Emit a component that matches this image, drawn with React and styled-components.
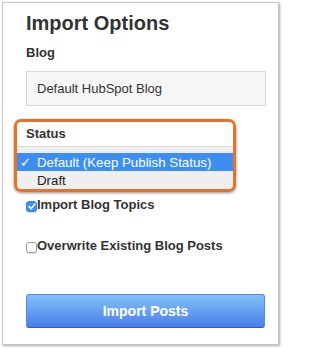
import React from 'react';
import styled, { createGlobalStyle } from 'styled-components';

const GlobalStyle = createGlobalStyle`
	html, body {
		margin: 0;
		padding: 0;
		background: #ffffff;
	}
	body {
		font-family: "Liberation Sans", Arial, sans-serif;
		color: #333333;
	}
`;

const Page = styled.div`
	padding: 2px 3px 3px 2px;
`;

const Panel = styled.div`
	box-sizing: border-box;
	width: 277px;
	height: 343px;
	padding: 8px 12px 0 23px;
	border: 1px solid #c9c9c9;
	background: #ffffff;
	box-shadow: 1px 1px 2px rgba(0, 0, 0, 0.35);
`;

const Title = styled.h2`
	margin: 0 0 10px;
	font-size: 20px;
	line-height: 24px;
	font-weight: bold;
	color: #333333;
`;

const Label = styled.div`
	font-size: 13px;
	line-height: 16px;
	font-weight: bold;
	color: #333333;
`;

const Field = styled.div`
	position: relative;
	margin-bottom: ${p => p.gap || 0}px;
`;

const TextBox = styled.div`
	box-sizing: border-box;
	height: 35px;
	margin-top: 10px;
	padding: 0 10px;
	display: flex;
	align-items: center;
	border: 1px solid #d6d6d6;
	background: #f6f6f6;
	font-size: 13px;
	line-height: 16px;
	color: #333333;
`;

const Highlight = styled.div`
	position: absolute;
	top: -7px;
	left: -12px;
	right: 30px;
	bottom: -3px;
	border: 3px solid #e5722a;
	border-radius: 7px;
	box-shadow: 0 1px 3px rgba(0, 0, 0, 0.45);
	pointer-events: none;
`;

const Menu = styled.div`
	width: 216px;
	margin: 4px 0 0 -9px;
	padding: 6px 0 0;
	border-top: 1px solid #d9d9d9;
	border-radius: 0 0 4px 4px;
	background: #efefef;
`;

const MenuItem = styled.div`
	display: flex;
	align-items: center;
	height: 18px;
	padding-left: 3px;
	font-size: 13.3px;
	color: ${p => (p.selected ? '#ffffff' : '#222222')};
	background: ${p => (p.selected ? '#3d8ef3' : 'transparent')};
`;

const Tick = styled.span`
	width: 17px;
	font-family: "DejaVu Sans", sans-serif;
	font-size: 13px;
`;

const CheckRow = styled.label`
	display: flex;
	align-items: center;
	margin-top: ${p => p.top}px;
	font-size: 13px;
	line-height: 16px;
	font-weight: bold;
	color: #333333;
`;

const Box = styled.span`
	box-sizing: border-box;
	display: flex;
	align-items: center;
	justify-content: center;
	width: 11px;
	height: 11px;
	margin-top: 2px;
	border-radius: 3px;
	border: 1px solid ${p => (p.checked ? '#3a82ea' : '#9a9a9a')};
	background: ${p => (p.checked ? '#3f8ef4' : '#ffffff')};
	box-shadow: 0 1px 1px rgba(0, 0, 0, 0.12);
`;

const Button = styled.button`
	display: block;
	box-sizing: border-box;
	width: 239px;
	height: 34px;
	margin-top: 40px;
	border: 1px solid #5688ea;
	border-bottom-color: #3358df;
	border-radius: 3px;
	background: linear-gradient(to bottom, #84c0f8 0%, #66a1f1 50%, #4a7ce8 100%);
	font-family: "Liberation Sans", Arial, sans-serif;
	font-size: 14px;
	font-weight: bold;
	color: #ffffff;
	cursor: pointer;
`;

const checkMark = (
	<svg width="8" height="7" viewBox="0 0 8 7">
		<path d="M1 3.6 L3.1 5.6 L7 1" fill="none" stroke="#ffffff" strokeWidth="1.6" strokeLinecap="round" strokeLinejoin="round" />
	</svg>
);

const CheckOption = ({ checked, top, children }) => (
	<CheckRow top={top}>
		<Box checked={checked}>{checked && checkMark}</Box>
		{children}
	</CheckRow>
);

const App = () => (
	<Page>
		<GlobalStyle />
		<Panel>
			<Title>Import Options</Title>
			<Field gap={20}>
				<Label>Blog</Label>
				<TextBox>Default HubSpot Blog</TextBox>
			</Field>
			<Field>
				<Label>Status</Label>
				<Menu>
					<MenuItem selected>
						<Tick>✓</Tick>Default (Keep Publish Status)
					</MenuItem>
					<MenuItem>
						<Tick />Draft
					</MenuItem>
				</Menu>
				<Highlight />
			</Field>
			<CheckOption checked top={8}>Import Blog Topics</CheckOption>
			<CheckOption top={25}>Overwrite Existing Blog Posts</CheckOption>
			<Button type="button">Import Posts</Button>
		</Panel>
	</Page>
);

export default App;
